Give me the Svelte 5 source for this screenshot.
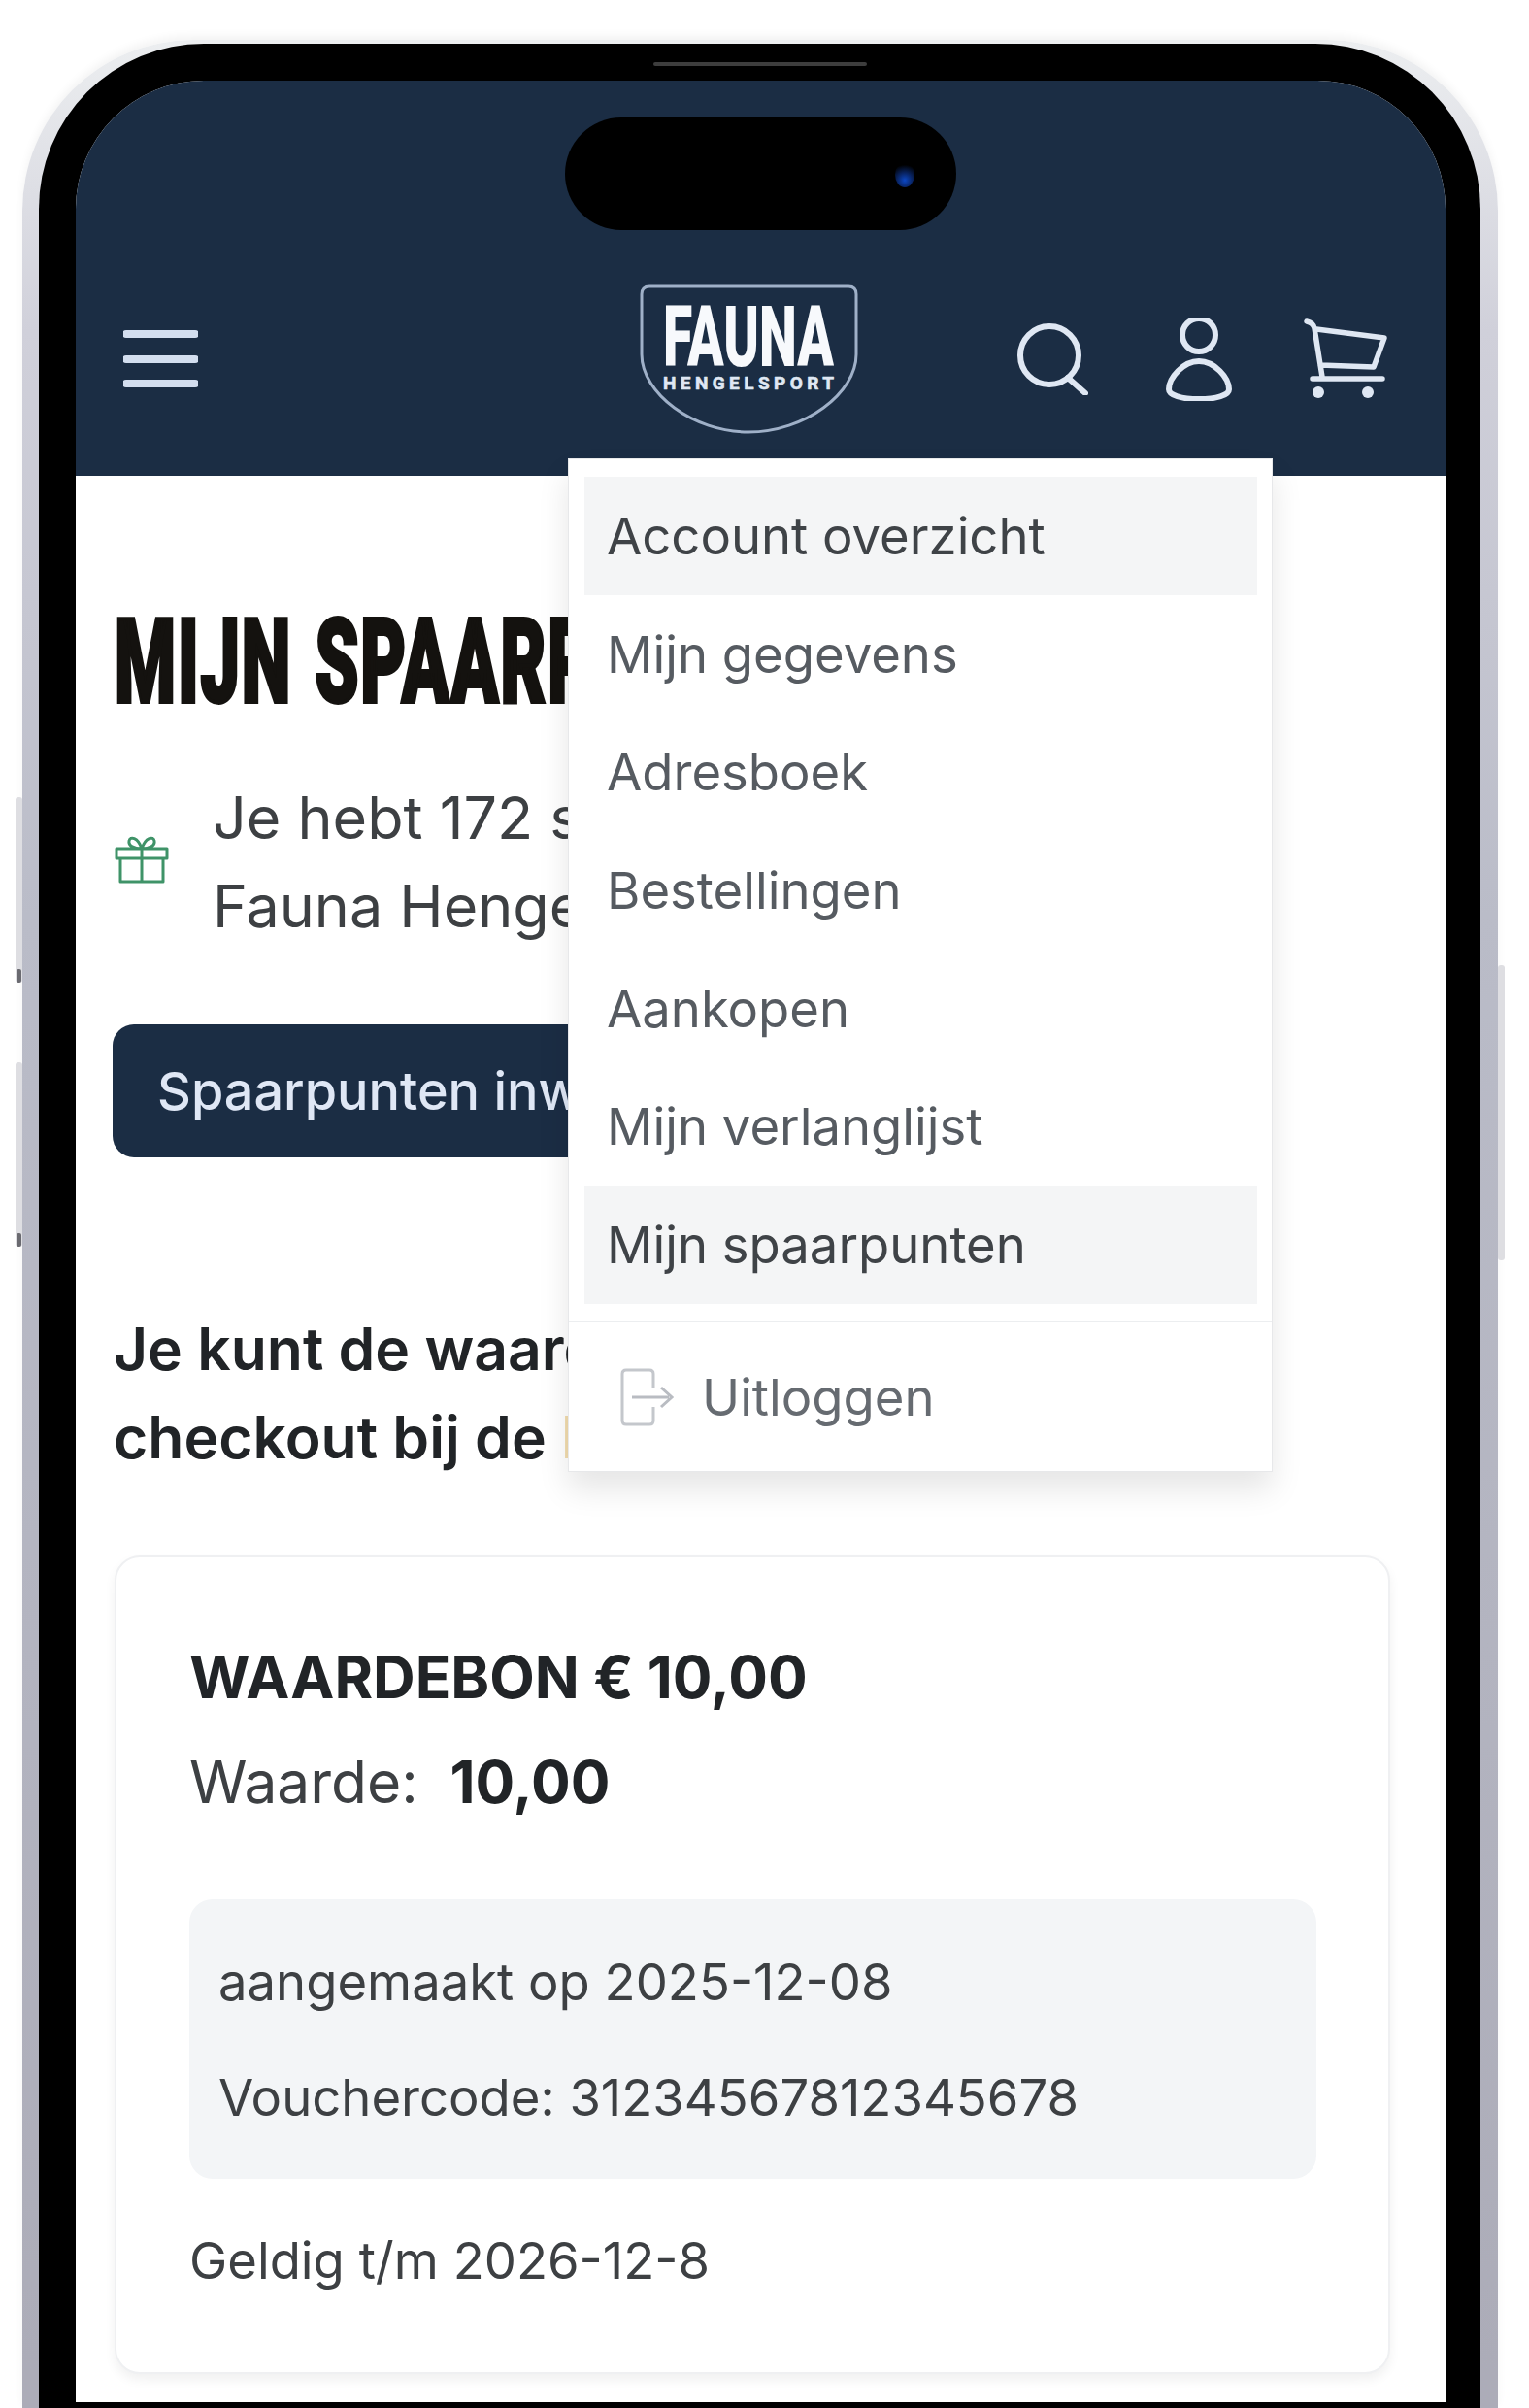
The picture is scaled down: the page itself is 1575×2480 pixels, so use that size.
<script>
    const menuItems = [
        { label: "Account overzicht", active: true },
        { label: "Mijn gegevens" },
        { label: "Adresboek" },
        { label: "Bestellingen" },
        { label: "Aankopen" },
        { label: "Mijn verlanglijst" },
        { label: "Mijn spaarpunten", active: true }
    ];
</script>

<div class="page">
    <div class="phone">
        <span class="side-btn vol-up"></span>
        <span class="side-btn vol-down"></span>
        <span class="side-btn power"></span>
        <div class="bezel">
            <div class="speaker"></div>
            <div class="screen">
                <div class="notch">
                    <span class="lens"></span>
                </div>

                <header>
                    <svg class="burger" width="77" height="60" viewBox="0 0 77 60" aria-hidden="true">
                        <path d="M3 4h71M3 30h71M3 55h71" />
                    </svg>
                    <div class="logo">
                        <svg width="225" height="154" viewBox="0 0 225 154">
                            <path class="shield" d="M10 2H215Q223 2 223 10V72C223 112 170 152 112 152C55 152 2 112 2 72V10Q2 2 10 2Z" />
                            <text class="fauna" x="112" y="84" text-anchor="middle" textLength="176" lengthAdjust="spacingAndGlyphs">FAUNA</text>
                            <text class="sport" x="112" y="108" text-anchor="middle" textLength="176" lengthAdjust="spacing">HENGELSPORT</text>
                        </svg>
                    </div>
                    <svg class="search" width="73" height="74" viewBox="0 0 73 74" aria-hidden="true">
                        <circle cx="33" cy="33" r="30" />
                        <path d="M52 56L70 72" />
                    </svg>
                    <svg class="person" width="68" height="86" viewBox="0 0 68 86" aria-hidden="true">
                        <circle cx="34" cy="18" r="17" />
                        <path d="M34 45C18 45 3 62 3 74C3 80 16 84 34 84C52 84 65 80 65 74C65 62 50 45 34 45Z" />
                    </svg>
                    <svg class="cart" width="86" height="84" viewBox="0 0 86 84" aria-hidden="true">
                        <path d="M3 3C8 4 10 6 11 10L19 60M13 11L83 20L72 50L17 48M9 62H81" />
                        <circle cx="15" cy="76" r="6" />
                        <circle cx="66" cy="76" r="6" />
                    </svg>
                </header>

                <nav class="dropdown">
                    <ul>
                        {#each menuItems as item}
                            <li class:active={item.active}>{item.label}</li>
                        {/each}
                    </ul>
                    <div class="logout">
                        <svg width="56" height="60" viewBox="0 0 56 60" aria-hidden="true">
                            <path class="door" d="M34 20V6Q34 2 30 2H6Q2 2 2 6V54Q2 58 6 58H30Q34 58 34 54V40" />
                            <path class="arrow" d="M12 30H50M42 20L53 30L42 40" />
                        </svg>
                        <span>Uitloggen</span>
                    </div>
                </nav>

                <main>
                    <h1>MIJN SPAARPUNTEN</h1>

                    <div class="points">
                        <svg width="56" height="50" viewBox="0 0 56 50" aria-hidden="true">
                            <path d="M2 14H54V24H2ZM6 24V48H50V24M28 14V48M28 14C20 14 14 11 15 6C16 1 24 2 28 14C32 2 40 1 41 6C42 11 36 14 28 14" />
                        </svg>
                        <p>Je hebt 172 spaarpunten<br />Fauna Hengelsport</p>
                    </div>

                    <button type="button">Spaarpunten inwisselen</button>

                    <p class="info">Je kunt de waardebon gebruiken in de<br />checkout bij de <mark>kassa</mark></p>

                    <section class="card">
                        <h2>WAARDEBON € 10,00</h2>
                        <div class="value">Waarde: <strong>10,00</strong></div>
                        <div class="details">
                            <div>aangemaakt op 2025-12-08</div>
                            <div>Vouchercode: 31234567812345678</div>
                        </div>
                        <div class="valid">Geldig t/m 2026-12-8</div>
                    </section>
                </main>
            </div>
        </div>
    </div>
</div>

<style>
    :global(body) {
        margin: 0;
        background: #fff;
    }

    .page {
        height: 2480px;
        overflow: hidden;
        padding: 41px 0 0 23px;
        box-sizing: border-box;
        font-family: Inter, "Noto Sans", sans-serif;
    }

    .phone {
        position: relative;
        width: 1520px;
        padding: 4px 18px 0 17px;
        box-sizing: border-box;
        border-radius: 176px 176px 0 0;
        background: linear-gradient(180deg, #eceef0 0, #d0d0da 300px, #babcc8 900px, #acacb8 2400px);
        box-shadow: 0 -4px 10px rgba(0, 0, 0, 0.05);
    }

    .side-btn {
        position: absolute;
        width: 7px;
        border-radius: 3px;
        background: #dedee2;
    }

    .vol-up {
        top: 780px;
        left: -7px;
        height: 191px;
    }

    .vol-down {
        top: 1053px;
        left: -7px;
        height: 190px;
    }

    .vol-up::after,
    .vol-down::after {
        content: "";
        position: absolute;
        bottom: 0;
        left: 1px;
        width: 5px;
        height: 14px;
        border-radius: 2px;
        background: #6a6a70;
    }

    .power {
        top: 953px;
        right: -7px;
        height: 304px;
    }

    .bezel {
        position: relative;
        padding: 38px 36px 6px 38px;
        border-radius: 170px 170px 0 0;
        background: #000;
    }

    .speaker {
        position: absolute;
        top: 19px;
        left: 633px;
        width: 220px;
        height: 4px;
        border-radius: 2px;
        background: #3d3d3d;
    }

    .screen {
        position: relative;
        height: 2391px;
        overflow: hidden;
        border-radius: 132px 132px 0 0;
        background: #fff;
    }

    .notch {
        position: absolute;
        top: 38px;
        left: 504px;
        width: 403px;
        height: 116px;
        border-radius: 58px;
        background: #000;
    }

    .lens {
        position: absolute;
        top: 46px;
        left: 340px;
        width: 20px;
        height: 26px;
        border-radius: 50%;
        background: radial-gradient(circle at 50% 72%, #0c47c4 0%, #08225e 38%, #000 75%);
    }

    header {
        display: flex;
        align-items: flex-end;
        height: 407px;
        padding-left: 49px;
        box-sizing: border-box;
        background: #1b2d44;
    }

    header svg {
        display: block;
        fill: none;
        stroke: #dfe7f3;
        stroke-linecap: round;
        stroke-linejoin: round;
    }

    .burger {
        margin-bottom: 90px;
        stroke: #d3deef;
        stroke-width: 8;
    }

    .logo {
        margin-left: 455px;
        margin-bottom: 43px;
    }

    .shield {
        stroke: #9fb0c8;
        stroke-width: 3;
    }

    .fauna {
        fill: #f7f9fc;
        stroke: none;
        font-family: Roboto, "Liberation Sans Narrow", sans-serif;
        font-weight: 900;
        font-size: 88px;
    }

    .sport {
        fill: #dfe7f3;
        stroke: #dfe7f3;
        stroke-width: 0.6;
        font-family: "Liberation Sans Narrow", Roboto, sans-serif;
        font-weight: 700;
        font-size: 19px;
    }

    .search {
        margin-left: 164px;
        margin-bottom: 83px;
        stroke-width: 6;
    }

    .person {
        margin-left: 80px;
        margin-bottom: 77px;
        stroke-width: 6;
    }

    .cart {
        margin-left: 74px;
        margin-bottom: 78px;
        stroke-width: 5.5;
    }

    .cart circle {
        fill: #dfe7f3;
        stroke: none;
    }

    .dropdown {
        position: absolute;
        top: 389px;
        left: 507px;
        z-index: 2;
        width: 726px;
        height: 1044px;
        box-sizing: border-box;
        border: 1px solid #e7e8ea;
        background: #fff;
        box-shadow: 0 18px 30px rgba(0, 0, 0, 0.1);
        color: #565b61;
        font-size: 52.6px;
    }

    .dropdown ul {
        margin: 0;
        padding: 18px 15px 17px 16px;
        list-style: none;
        border-bottom: 2px solid #eceef0;
    }

    .dropdown li {
        display: flex;
        align-items: center;
        height: 121.7px;
        padding-left: 23px;
    }

    .dropdown li.active {
        background: #f4f5f6;
        color: #3f4347;
    }

    .logout {
        display: flex;
        align-items: center;
        gap: 28px;
        height: 154px;
        padding-left: 53px;
        color: #666b71;
    }

    .logout svg {
        display: block;
        fill: none;
        stroke-width: 3;
    }

    .door {
        stroke: #c4c7cc;
    }

    .arrow {
        stroke: #b9bcc2;
    }

    main {
        padding: 0 40px;
        color: #212427;
    }

    h1 {
        margin: 122px 0 0;
        width: 1300px;
        color: #14120f;
        font-family: Roboto, "Liberation Sans", sans-serif;
        font-weight: 900;
        font-size: 120px;
        line-height: 140px;
        white-space: nowrap;
        letter-spacing: 3px;
        word-spacing: 6px;
        -webkit-text-stroke: 4px #14120f;
        transform: scaleX(0.6);
        transform-origin: left center;
    }

    .points {
        display: flex;
        align-items: center;
        gap: 45px;
        margin-top: 45px;
        color: #3d4043;
    }

    .points svg {
        flex: none;
        margin-bottom: 6px;
        fill: none;
        stroke: #3f9368;
        stroke-width: 3;
        stroke-linejoin: round;
    }

    .points p {
        margin: 0;
        font-size: 61px;
        line-height: 91px;
        white-space: nowrap;
    }

    button {
        display: block;
        height: 137px;
        margin: 76px 0 0 -2px;
        padding: 0 46px;
        border: 0;
        border-radius: 22px;
        background: #1b2d44;
        color: #dfe7f5;
        font: inherit;
        font-size: 54px;
        font-weight: 500;
    }

    .info {
        margin: 152px 0 0 -1px;
        font-size: 60.6px;
        font-weight: 600;
        line-height: 91px;
        white-space: nowrap;
    }

    mark {
        background: none;
        color: #f2dcae;
    }

    .card {
        width: 1314px;
        height: 843px;
        margin-top: 76px;
        padding: 78px 74px 0 75px;
        box-sizing: border-box;
        border: 2px solid #eff0f2;
        border-radius: 26px;
        background: #fff;
        box-shadow: 0 6px 12px rgba(0, 0, 0, 0.06);
    }

    h2 {
        margin: 0;
        font-size: 60.4px;
        font-weight: 700;
        line-height: 90px;
    }

    .value {
        margin-top: 18px;
        color: #3d4043;
        font-size: 60.4px;
        line-height: 90px;
    }

    .value strong {
        margin-left: 16px;
        color: #212427;
        font-weight: 700;
    }

    .details {
        display: grid;
        gap: 29px;
        height: 288px;
        margin-top: 76px;
        padding: 40px 30px 0;
        box-sizing: border-box;
        border-radius: 24px;
        background: #f3f5f7;
        color: #3d4043;
        font-size: 52.6px;
        line-height: 90px;
        align-content: start;
    }

    .valid {
        margin-top: 39px;
        color: #3d4043;
        font-size: 52.6px;
        line-height: 90px;
    }
</style>
